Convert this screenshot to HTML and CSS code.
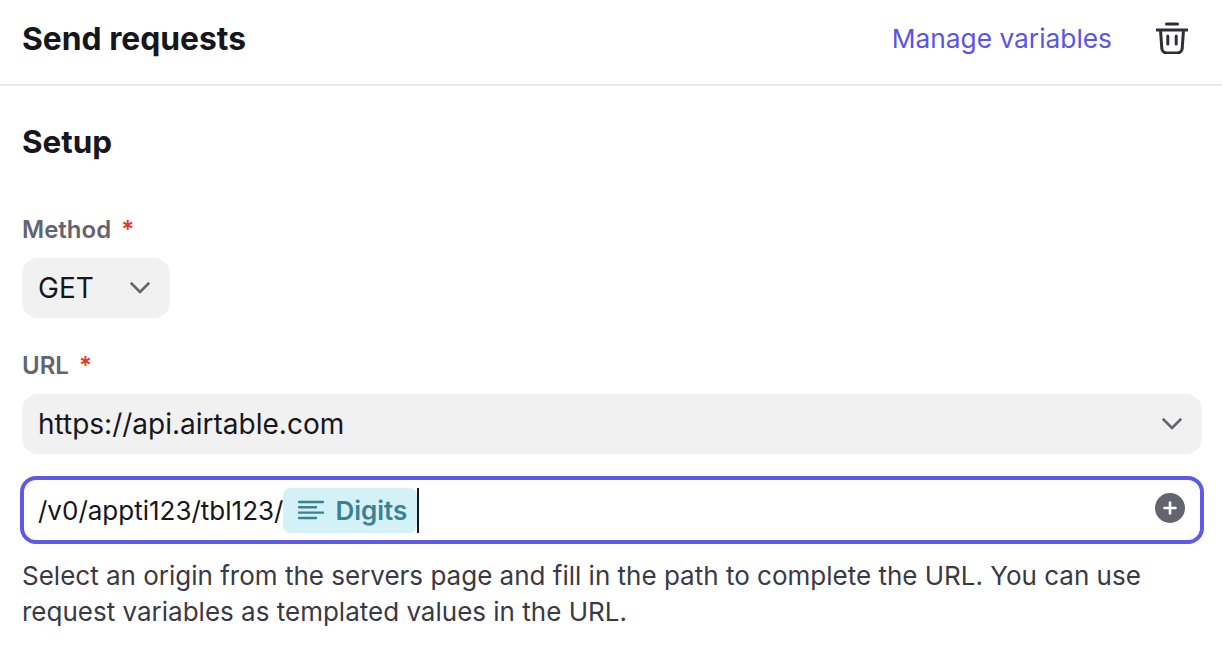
FILE: index.html
```html
<!DOCTYPE html>
<html lang="en">
<head>
<meta charset="utf-8">
<title>Send requests</title>
<link rel="stylesheet" href="styles.css">
</head>
<body>
<header class="header">
  <h1 class="title">Send requests</h1>
  <div class="actions">
    <a class="link">Manage variables</a>
    <svg class="trash" viewBox="0 0 32 32" fill="none" stroke="#2f2d38" stroke-width="3" stroke-linecap="round" stroke-linejoin="round"><path d="M10.500 2h11M1 8h30M4.500 8l1.300 18.500a5 5 0 0 0 5 4.500h10.400a5 5 0 0 0 5-4.500L27.500 8M11.800 14v8M20.200 14v8"/></svg>
  </div>
</header>
<main class="content">
  <h2 class="section">Setup</h2>
  <div class="label label-method">Method<span class="req">*</span></div>
  <div class="select select-method">
    <span>GET</span>
    <svg class="chev" viewBox="0 0 20 12" fill="none" stroke="#63646f" stroke-width="2.600" stroke-linecap="round" stroke-linejoin="round"><path d="M1.500 1.500 10 10l8.500-8.500"/></svg>
  </div>
  <div class="label label-url">URL<span class="req">*</span></div>
  <div class="select select-url">
    <span>https://api.airtable.com</span>
    <svg class="chev" viewBox="0 0 20 12" fill="none" stroke="#63646f" stroke-width="2.600" stroke-linecap="round" stroke-linejoin="round"><path d="M1.500 1.500 10 10l8.500-8.500"/></svg>
  </div>
  <div class="input">
    <span class="path">/v0/appti123/tbl123/</span>
    <span class="token">
      <svg class="lines" viewBox="0 0 26 20" fill="none" stroke="#3a8293" stroke-width="2.400" stroke-linecap="round"><path d="M1 2h24M1 7.300h17M1 12.600h24M1 18h17"/></svg>
      Digits
    </span>
    <span class="caret"></span>
    <svg class="plus" viewBox="0 0 30 30"><circle cx="15" cy="15" r="15" fill="#63646f"/><path d="M15 9.500v11M9.500 15h11" stroke="#fff" stroke-width="2.600" stroke-linecap="round"/></svg>
  </div>
  <p class="help">Select an origin from the servers page and fill in the path to complete the URL. You can use request variables as templated values in the URL.</p>
</main>
</body>
</html>
```
FILE: styles.css
```css
* { box-sizing: border-box; }
html, body { margin: 0; padding: 0; }
body {
  width: 1222px;
  height: 646px;
  overflow: hidden;
  background: #fff;
  font-family: Inter, "Liberation Sans", sans-serif;
  font-optical-sizing: none;
  font-variation-settings: "opsz" 14;
  color: #16161d;
}
.header {
  height: 86px;
  border-bottom: 2px solid #e9e9ee;
  padding: 0 34px 8px 22px;
  display: flex;
  align-items: center;
  justify-content: space-between;
}
.title { margin: 0; font-size: 31.800px; font-weight: 700; }
.actions { display: flex; align-items: center; gap: 44px; }
.link { color: #5b54e8; font-size: 26.300px; }
.trash { width: 32px; height: 32px; display: block; }
.content { padding: 0 20px 0 22px; }
.section { margin: 0; padding-top: 38px; font-size: 31.400px; line-height: 36px; font-weight: 700; }
.label { color: #63646f; font-size: 24px; font-weight: 600; line-height: 30px; }
.label-method { margin-top: 55px; }
.label-url { margin-top: 33px; }
.req { color: #e03a24; margin-left: 10px; }
.select {
  background: #f1f1f1;
  border-radius: 16px;
  height: 60px;
  margin-top: 13px;
  padding: 0 20px 0 16px;
  display: flex;
  align-items: center;
  justify-content: space-between;
  font-size: 28px;
}
.select-method { width: 148px; }
.chev { width: 20px; height: 12px; display: block; }
.input {
  height: 68px;
  margin: 22px -2px 0 -2px;
  border: 4px solid #5e59e6;
  border-radius: 16px;
  display: flex;
  align-items: center;
  padding: 0 15px 0 14px;
  font-size: 26px;
}
.token {
  display: flex;
  align-items: center;
  gap: 11px;
  height: 45px;
  padding: 0 10px 0 15px;
  background: #d4f1f7;
  border-radius: 8px;
  color: #3a8293;
  font-weight: 600;
}
.lines { width: 26px; height: 20px; display: block; }
.caret { width: 2px; height: 45px; background: #16161d; }
.plus { width: 30px; height: 30px; margin-left: auto; margin-bottom: 4px; display: block; }
.help { margin: 14px 0 0; font-size: 26px; line-height: 36px; color: #3a3946; }
```
